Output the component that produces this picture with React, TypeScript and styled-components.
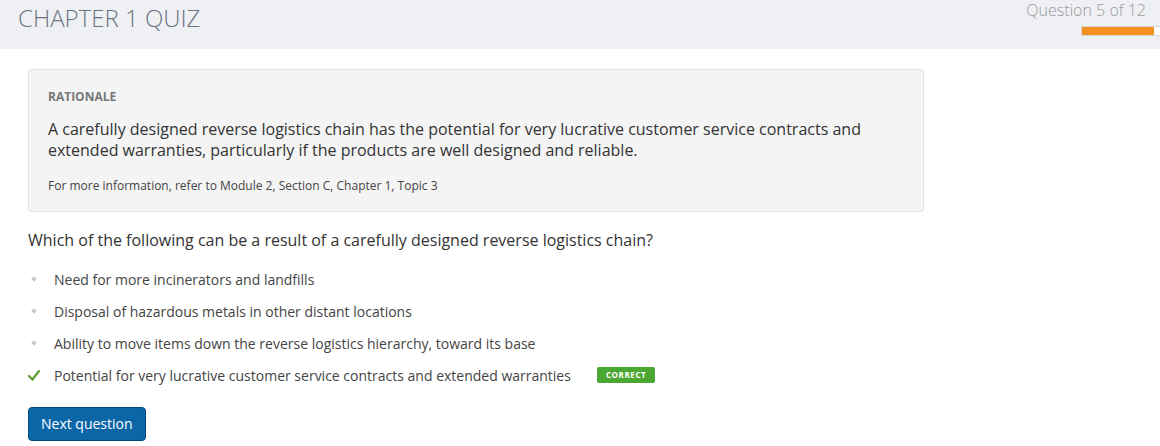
import React from "react";
import styled, { createGlobalStyle } from "styled-components";

const GlobalStyle = createGlobalStyle`
  body {
    margin: 0;
    font-family: "Open Sans", "Liberation Sans", sans-serif;
    background: #ffffff;
    color: #333333;
  }
`;

const Header = styled.div`
  height: 49px;
  background-color: #eff0f4;
  display: flex;
  justify-content: space-between;
  align-items: flex-start;
`;

const Title = styled.h1`
  margin: 0;
  padding: 1px 0 0 18px;
  font-size: 24px;
  font-weight: 300;
  color: #6b7482;
  line-height: 33px;
`;

const Progress = styled.div`
  display: flex;
  flex-direction: column;
  align-items: flex-end;
`;

const ProgressLabel = styled.div`
  font-size: 16px;
  font-weight: 300;
  color: #9a9a9a;
  line-height: 20px;
  padding-right: 14px;
`;

const Track = styled.div`
  margin-top: 6px;
  width: 78px;
  height: 8px;
  background: #ffffff;
  border: 1px solid #d6d6d6;
  border-right: none;
  display: flex;
`;

const Fill = styled.div`
  background: #f39021;
  height: 100%;
`;

const Main = styled.div`
  padding: 20px 28px 0 28px;
`;

const Rationale = styled.div`
  width: 855px;
  background: #f4f4f4;
  border: 1px solid #e4e4e4;
  border-radius: 3px;
  padding: 19px 20px 17px 19px;
`;

const RationaleLabel = styled.div`
  font-size: 12px;
  font-weight: 700;
  color: #777777;
  line-height: 16px;
`;

const RationaleText = styled.p`
  margin: 14px 0 0 0;
  font-size: 16px;
  line-height: 21px;
  color: #333333;
`;

const RationaleNote = styled.p`
  margin: 17px 0 0 0;
  font-size: 12px;
  line-height: 16px;
  color: #444444;
`;

const Question = styled.p`
  margin: 17px 0 0 0;
  font-size: 16px;
  line-height: 22px;
  color: #333333;
`;

const Options = styled.ul`
  list-style: none;
  margin: 18px 0 0 0;
  padding: 0;
  display: flex;
  flex-direction: column;
  gap: 12px;
`;

const Option = styled.li`
  display: flex;
  align-items: center;
  height: 20px;
  font-size: 14px;
  color: #444444;
`;

const Marker = styled.span`
  width: 26px;
  display: flex;
  align-items: center;
  justify-content: flex-start;
`;

const Dot = styled.span`
  width: 4px;
  height: 4px;
  margin-left: 4px;
  background: #c8c8c8;
  transform: rotate(45deg);
`;

const Badge = styled.span`
  margin-left: 26px;
  background: #4aa832;
  color: #ffffff;
  font-size: 8px;
  font-weight: 700;
  letter-spacing: 0.6px;
  padding: 0 9px;
  height: 16px;
  line-height: 16px;
  border-radius: 2px;
`;

const NextButton = styled.button`
  margin-top: 22px;
  background: #0a66a7;
  border: 1px solid #06497a;
  border-radius: 4px;
  color: #ffffff;
  font-family: "Open Sans", "Liberation Sans", sans-serif;
  font-size: 14px;
  height: 34px;
  padding: 0 12px 1px;
  cursor: pointer;
`;

const Check = () => (
  <svg width="12" height="11" viewBox="0 0 12 11">
    <path d="M1 6 L4.5 9.5 L11 1" fill="none" stroke="#5aa12c" strokeWidth="2.2" strokeLinecap="round" />
  </svg>
);

const options = [
  { text: "Need for more incinerators and landfills", correct: false },
  { text: "Disposal of hazardous metals in other distant locations", correct: false },
  { text: "Ability to move items down the reverse logistics hierarchy, toward its base", correct: false },
  { text: "Potential for very lucrative customer service contracts and extended warranties", correct: true },
];

export default function App() {
  const current = 5;
  const total = 12;
  return (
    <>
      <GlobalStyle />
      <Header>
        <Title>CHAPTER 1 QUIZ</Title>
        <Progress>
          <ProgressLabel>Question {current} of {total}</ProgressLabel>
          <Track>
            <Fill style={{ width: `${(71 / 77) * 100}%` }} />
          </Track>
        </Progress>
      </Header>
      <Main>
        <Rationale>
          <RationaleLabel>RATIONALE</RationaleLabel>
          <RationaleText>
            A carefully designed reverse logistics chain has the potential for very lucrative customer service contracts and
            extended warranties, particularly if the products are well designed and reliable.
          </RationaleText>
          <RationaleNote>For more information, refer to Module 2, Section C, Chapter 1, Topic 3</RationaleNote>
        </Rationale>
        <Question>Which of the following can be a result of a carefully designed reverse logistics chain?</Question>
        <Options>
          {options.map((o) => (
            <Option key={o.text}>
              <Marker>{o.correct ? <Check /> : <Dot />}</Marker>
              {o.text}
              {o.correct && <Badge>CORRECT</Badge>}
            </Option>
          ))}
        </Options>
        <NextButton>Next question</NextButton>
      </Main>
    </>
  );
}
